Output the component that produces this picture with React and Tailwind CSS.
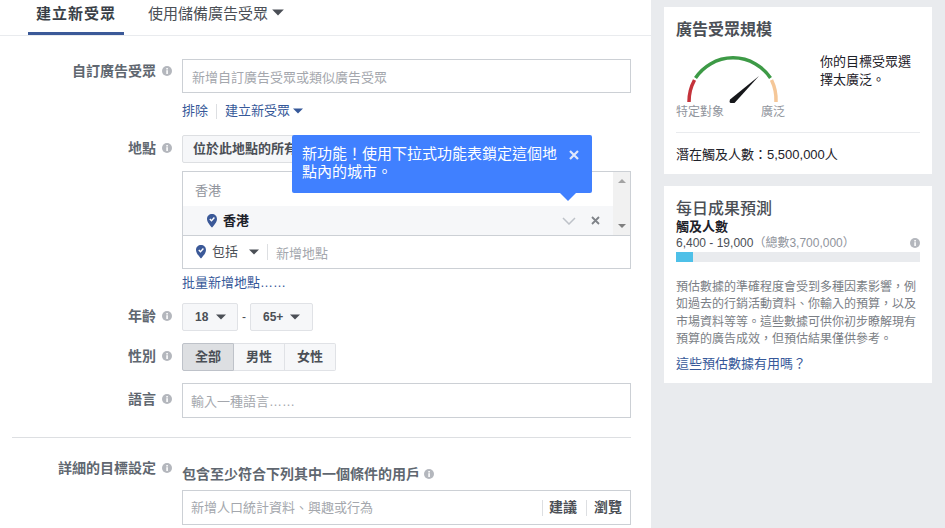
import React from "react";

const FONT = { fontFamily: '"Liberation Sans","Noto Sans CJK TC",sans-serif' };

function Info({ className = "" }) {
  return (
    <svg width="10" height="10" viewBox="0 0 10 10" className={"shrink-0 " + className}>
      <circle cx="5" cy="5" r="5" fill="#b4b7bd" />
      <rect x="4.2" y="4.2" width="1.8" height="3.8" fill="#f5f6f7" />
      <rect x="4.2" y="2" width="1.8" height="1.5" fill="#f5f6f7" />
    </svg>
  );
}

function Caret({ color = "#4b4f56", className = "", w = 10, h = 6 }) {
  return (
    <svg width={w} height={h} viewBox="0 0 10 6" className={"shrink-0 " + className}>
      <path d="M0 0.5H10L5 5.5Z" fill={color} />
    </svg>
  );
}

function Pin({ className = "" }) {
  return (
    <svg width="10" height="14" viewBox="0 0 10 14" className={"shrink-0 " + className}>
      <path d="M5 0C2.2 0 0 2.1 0 4.9C0 8.3 3.5 11.6 5 13.6C6.5 11.6 10 8.3 10 4.9C10 2.1 7.8 0 5 0Z" fill="#3b5998" />
      <path d="M2.8 5L4.5 6.7L7.4 3.6" fill="none" stroke="#fff" strokeWidth="1.4" />
    </svg>
  );
}

function Label({ children, className = "" }) {
  return (
    <div className={"w-[172px] flex justify-end items-center gap-[6px] text-[14px] leading-[18px] font-bold text-[#606770] " + className}>
      <span>{children}</span>
      <Info />
    </div>
  );
}

function Gauge() {
  return (
    <svg width="100" height="50" viewBox="0 0 100 50" className="block">
      <path d="M2 49 A45 45 0 0 1 7.5 27" fill="none" stroke="#c4323a" strokeWidth="3.5" />
      <path d="M8.5 25 A45 45 0 0 1 83.5 25" fill="none" stroke="#3d9a46" strokeWidth="3.5" />
      <path d="M84.5 27 A45 45 0 0 1 89 49" fill="none" stroke="#f5c798" strokeWidth="3.5" />
      <path d="M43 46.5 L72 23 L47.5 50 Q43.5 51 42.5 49 Z" fill="#16171a" />
    </svg>
  );
}

export default function App() {
  return (
    <div style={FONT} className="w-[945px] h-[528px] overflow-hidden flex bg-white text-[#1d2129]">
      <div className="w-[651px] shrink-0 bg-white relative">
        <div className="h-[36px] border-b border-[#e9ebee] flex pl-[28px]">
          <div className="w-[96px] h-[35px] border-b-[3px] border-[#3b5998] flex justify-center pt-[4px] text-[15px] leading-[20px] font-bold tracking-[1px] text-[#3a3f47]">
            建立新受眾
          </div>
          <div className="ml-[24px] pt-[4px] flex items-start text-[15px] leading-[20px] text-[#4b4f56]">
            <span>使用儲備廣告受眾</span>
            <Caret className="ml-[4px] mt-[5px]" w={12} h={7} />
          </div>
        </div>

        <div className="flex mt-[23px]">
          <Label className="h-[23px]">自訂廣告受眾</Label>
          <div className="ml-[10px] w-[449px]">
            <div className="h-[34px] border border-[#ccd0d5] flex items-center pl-[9px] pt-[3px] text-[13px] text-[#a4a7ad]">
              新增自訂廣告受眾或類似廣告受眾
            </div>
            <div className="flex items-center h-[18px] mt-[9px] text-[13px] text-[#365899]">
              <span>排除</span>
              <span className="ml-[8px] w-px h-[15px] bg-[#dddfe2]" />
              <span className="ml-[8px]">建立新受眾</span>
              <Caret color="#365899" className="ml-[3px]" />
            </div>
          </div>
        </div>

        <div className="flex mt-[15px]">
          <Label className="h-[25px]">地點</Label>
          <div className="ml-[10px] w-[449px]">
            <div className="h-[28px] w-[150px] border border-[#dddfe2] rounded-[2px] bg-[#f6f7f9] flex items-center pl-[10px] text-[13px] font-bold text-[#4b4f56] overflow-hidden whitespace-nowrap">
              位於此地點的所有人
            </div>
            <div className="mt-[8px] h-[98px] border border-[#ccd0d5] flex flex-col">
              <div className="h-[64px] shrink-0 flex border-b border-[#ccd0d5]">
                <div className="flex-1 flex flex-col">
                  <div className="h-[34px] pl-[12px] pt-[8px] text-[13px] leading-[22px] text-[#90949c]">香港</div>
                  <div className="h-[29px] bg-[#f6f7f9] flex items-center pl-[24px]">
                    <Pin />
                    <span className="ml-[6px] text-[13px] font-bold text-[#1d2129]">香港</span>
                    <svg width="14" height="8" viewBox="0 0 14 8" className="ml-auto">
                      <path d="M1 1L7 7L13 1" fill="none" stroke="#bec2c9" strokeWidth="1.5" />
                    </svg>
                    <svg width="9" height="9" viewBox="0 0 9 9" className="ml-[15px] mr-[13px]">
                      <path d="M1 1L8 8M8 1L1 8" fill="none" stroke="#7f8389" strokeWidth="1.8" />
                    </svg>
                  </div>
                </div>
                <div className="w-[17px] bg-[#f1f1f1] flex flex-col items-center justify-between py-[7px]">
                  <svg width="8" height="4" viewBox="0 0 8 4"><path d="M4 0L8 4H0Z" fill="#a3a3a3" /></svg>
                  <svg width="8" height="4" viewBox="0 0 8 4"><path d="M0 0H8L4 4Z" fill="#7f7f7f" /></svg>
                </div>
              </div>
              <div className="flex-1 flex items-center pl-[13px]">
                <Pin />
                <span className="ml-[6px] text-[13px] text-[#4b4f56]">包括</span>
                <Caret className="ml-[11px]" />
                <span className="ml-[8px] w-px h-[16px] bg-[#dddfe2]" />
                <span className="ml-[8px] pt-[3px] text-[13px] text-[#a4a7ad]">新增地點</span>
              </div>
            </div>
            <div className="mt-[5px] h-[18px] text-[13px] leading-[18px] text-[#365899]">批量新增地點……</div>
          </div>
        </div>

        <div className="flex mt-[11px]">
          <Label className="h-[25px]">年齡</Label>
          <div className="ml-[10px] flex items-center h-[28px]">
            <div className="w-[56px] h-[28px] border border-[#e0e2e6] rounded-[2px] bg-[#f6f7f9] flex items-center pl-[12px] text-[12px] font-bold text-[#4b4f56]">
              18<Caret className="ml-[8px]" />
            </div>
            <span className="w-[12px] text-center text-[12px] text-[#4b4f56]">-</span>
            <div className="w-[63px] h-[28px] border border-[#e0e2e6] rounded-[2px] bg-[#f6f7f9] flex items-center pl-[12px] text-[12px] font-bold text-[#4b4f56]">
              65+<Caret className="ml-[7px]" />
            </div>
          </div>
        </div>

        <div className="flex mt-[12px]">
          <Label className="h-[25px]">性別</Label>
          <div className="ml-[10px] flex h-[28px] text-[13px] font-bold text-[#4b4f56]">
            <div className="w-[52px] border border-[#bec2c9] rounded-l-[2px] bg-[#dddfe2] flex items-center justify-center">全部</div>
            <div className="w-[51px] border-y border-r border-[#e0e2e6] bg-[#f6f7f9] flex items-center justify-center">男性</div>
            <div className="w-[51px] border-y border-r border-[#e0e2e6] rounded-r-[2px] bg-[#f6f7f9] flex items-center justify-center">女性</div>
          </div>
        </div>

        <div className="flex mt-[12px]">
          <Label className="h-[31px]">語言</Label>
          <div className="ml-[10px] w-[449px] h-[35px] border border-[#ccd0d5] flex items-center pl-[8px] pt-[2px] text-[13px] text-[#a4a7ad]">
            輸入一種語言……
          </div>
        </div>

        <div className="ml-[12px] w-[619px] h-px bg-[#dddfe2] mt-[19px]" />

        <div className="flex mt-[21px]">
          <Label className="h-[18px]">詳細的目標設定</Label>
          <div className="ml-[10px] w-[449px]">
            <div className="h-[18px] mt-[6px] flex items-center gap-[4px] text-[14px] font-bold text-[#606770]">
              <span>包含至少符合下列其中一個條件的用戶</span>
              <Info />
            </div>
            <div className="mt-[7px] h-[35px] border border-[#ccd0d5] flex items-center pl-[8px] text-[13px] text-[#a4a7ad]">
              <span>新增人口統計資料、興趣或行為</span>
              <div className="ml-auto flex items-center text-[14px] font-bold text-[#4b4f56]">
                <span className="w-px h-[16px] bg-[#dddfe2]" />
                <span className="ml-[6px] mr-[9px]">建議</span>
                <span className="w-px h-[16px] bg-[#dddfe2]" />
                <span className="ml-[7px] mr-[8px]">瀏覽</span>
              </div>
            </div>
          </div>
        </div>

        {/* tooltip */}
        <div className="absolute left-[292px] top-[135px] w-[300px] h-[58px] bg-[#4080ff] rounded-[2px] text-white text-[15px] leading-[18px] pl-[10px] pt-[10px]">
          <div className="w-[258px]">新功能！使用下拉式功能表鎖定這個地點內的城市。</div>
          <svg width="10" height="10" viewBox="0 0 10 10" className="absolute right-[13px] top-[15px]">
            <path d="M1 1L9 9M9 1L1 9" fill="none" stroke="#dfe8fb" strokeWidth="2.2" />
          </svg>
          <svg width="16" height="8" viewBox="0 0 16 8" className="absolute left-[268px] top-[58px]">
            <path d="M0 0H16L8 8Z" fill="#4080ff" />
          </svg>
        </div>
      </div>

      <div className="flex-1 bg-[#e9ebee] pl-[13px] pr-[13px] pt-[7px]">
        <div className="h-[167px] bg-white px-[12px] pt-[13px]">
          <div className="text-[16px] leading-[20px] font-bold text-[#4b4f56]">廣告受眾規模</div>
          <div className="flex h-[79px] mt-[13px]">
            <div className="w-[144px]">
              <div className="pl-[11px]"><Gauge /></div>
              <div className="flex justify-between w-[109px] text-[12px] leading-[14px] text-[#90949c] mt-[2px] whitespace-nowrap">
                <span>特定對象</span>
                <span>廣泛</span>
              </div>
            </div>
            <div className="text-[13px] leading-[18px] text-[#1d2129] w-[100px]">你的目標受眾選擇太廣泛。</div>
          </div>
          <div className="h-px bg-[#e9ebee]" />
          <div className="mt-[13px] text-[13px] leading-[18px] text-[#1d2129]">潛在觸及人數：5,500,000人</div>
        </div>

        <div className="mt-[12px] h-[197px] bg-white px-[12px] pt-[13px]">
          <div className="text-[16px] leading-[20px] font-medium text-[#4b4f56]">每日成果預測</div>
          <div className="text-[13px] leading-[16px] font-bold text-[#1d2129]">觸及人數</div>
          <div className="flex items-center justify-between h-[18px] -mt-px">
            <span className="text-[12px] text-[#4b4f56]">6,400 - 19,000<span className="text-[#90949c]">（總數3,700,000）</span></span>
            <Info />
          </div>
          <div className="h-[10px] bg-[#e9ebee]">
            <div className="h-full w-[17px] bg-[#4ec0e8]" />
          </div>
          <div className="mt-[17px] text-[12px] leading-[17.4px] text-[#7a7e85]">
            預估數據的準確程度會受到多種因素影響，例如過去的行銷活動資料、你輸入的預算，以及市場資料等等。這些數據可供你初步瞭解現有預算的廣告成效，但預估結果僅供參考。
          </div>
          <div className="mt-[6px] text-[13px] leading-[18px] text-[#365899]">這些預估數據有用嗎？</div>
        </div>
      </div>
    </div>
  );
}
